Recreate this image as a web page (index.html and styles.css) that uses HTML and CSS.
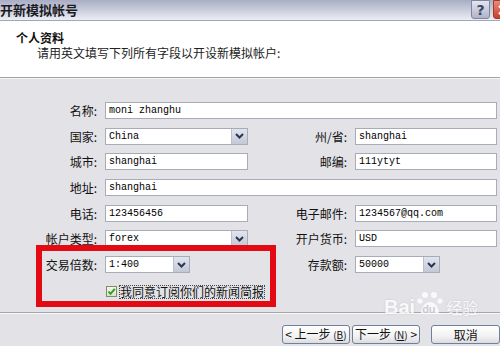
FILE: index.html
```html
<!DOCTYPE html>
<html>
<head>
<meta charset="utf-8">
<link rel="stylesheet" href="styles.css">
</head>
<body>
<div class="window">
  <div class="titlebar">
    <span class="title">开新模拟帐号</span>
    <div class="tb-buttons">
      <span class="tb-help">?</span>
      <span class="tb-close"><svg width="10" height="10" viewBox="0 0 10 10"><path d="M1 1 L9 9 M9 1 L1 9" stroke="#fff" stroke-width="2"/></svg></span>
    </div>
  </div>
  <div class="header">
    <div class="h-title">个人资料</div>
    <div class="h-sub">请用英文填写下列所有字段以开设新模拟帐户:</div>
  </div>
  <div class="body">
    <div class="grid">
      <label class="lbl">名称:</label>
      <div class="field span3">moni zhanghu</div>

      <label class="lbl">国家:</label>
      <div class="field select"><span class="val">China</span><span class="drop"><svg width="9" height="6" viewBox="0 0 9 6"><path d="M1 1 L4.5 4.5 L8 1" fill="none" stroke="#2b3550" stroke-width="2"/></svg></span></div>
      <label class="lbl">州/省:</label>
      <div class="field">shanghai</div>

      <label class="lbl">城市:</label>
      <div class="field">shanghai</div>
      <label class="lbl">邮编:</label>
      <div class="field">111ytyt</div>

      <label class="lbl">地址:</label>
      <div class="field span3">shanghai</div>

      <label class="lbl">电话:</label>
      <div class="field">123456456</div>
      <label class="lbl">电子邮件:</label>
      <div class="field">1234567@qq.com</div>

      <label class="lbl">帐户类型:</label>
      <div class="field select"><span class="val">forex</span><span class="drop"><svg width="9" height="6" viewBox="0 0 9 6"><path d="M1 1 L4.5 4.5 L8 1" fill="none" stroke="#2b3550" stroke-width="2"/></svg></span></div>
      <label class="lbl">开户货币:</label>
      <div class="field">USD</div>

      <label class="lbl">交易倍数:</label>
      <div class="field select short"><span class="val">1:400</span><span class="drop"><svg width="9" height="6" viewBox="0 0 9 6"><path d="M1 1 L4.5 4.5 L8 1" fill="none" stroke="#2b3550" stroke-width="2"/></svg></span></div>
      <label class="lbl">存款额:</label>
      <div class="field select short"><span class="val">50000</span><span class="drop"><svg width="9" height="6" viewBox="0 0 9 6"><path d="M1 1 L4.5 4.5 L8 1" fill="none" stroke="#2b3550" stroke-width="2"/></svg></span></div>
    </div>
    <div class="agree">
      <span class="check"><svg width="9" height="9" viewBox="0 0 9 9"><path d="M1.5 4.5 L3.5 6.8 L7.8 1.8" fill="none" stroke="#21a121" stroke-width="1.8"/></svg></span>
      <span class="agree-text">我同意订阅你们的新闻简报</span>
    </div>
  </div>
  <div class="footer">
    <button class="btn btn-back">&lt; 上一步 <small>(<u>B</u>)</small></button>
    <button class="btn btn-next">下一步 <small>(<u>N</u>)</small> &gt;</button>
    <button class="btn btn-cancel">取消</button>
  </div>
  <div class="redbox"></div>
  <div class="watermark">
    <span class="wm-bai">Bai</span>
    <span class="wm-paw">
      <svg width="28" height="28" viewBox="0 0 28 28">
        <circle cx="9" cy="5" r="3" fill="#fff"/>
        <circle cx="18" cy="5" r="3" fill="#fff"/>
        <circle cx="4" cy="11" r="2.6" fill="#fff"/>
        <circle cx="24" cy="11" r="2.6" fill="#fff"/>
        <path d="M5 24 C5 16 10 12 14 12 C18 12 23 16 23 24 Z" fill="#fff"/>
      </svg>
      <span class="wm-du">du</span>
    </span>
    <span class="wm-jy">经验</span>
  </div>
</div>
</body>
</html>
```
FILE: styles.css
```css
* { box-sizing: border-box; }
html, body {
  margin: 0;
  padding: 0;
}
body {
  width: 500px;
  height: 346px;
  overflow: hidden;
  font-family: "Noto Sans CJK SC", "DejaVu Sans", sans-serif;
  font-size: 12px;
  color: #111;
  background: #e3e3e7;
}
.window {
  position: relative;
  width: 500px;
  height: 346px;
  display: flex;
  flex-direction: column;
}
.titlebar {
  height: 21px;
  flex: none;
  display: flex;
  align-items: flex-start;
  justify-content: space-between;
  background: linear-gradient(#a9adc5, #cdd0de 55%, #eceef4);
  border-bottom: 1px solid #a3a6b8;
}
.title {
  font-weight: bold;
  font-size: 13px;
  line-height: 20px;
  color: #1a1a22;
}
.tb-buttons {
  display: flex;
  gap: 3px;
  margin-right: -13px;
}
.tb-help, .tb-close {
  width: 19px;
  height: 19px;
  border-radius: 0 0 3px 3px;
  display: flex;
  align-items: center;
  justify-content: center;
  font-family: "DejaVu Sans", sans-serif;
  font-weight: bold;
  font-size: 14px;
}
.tb-help {
  background: linear-gradient(#e4e6ee, #aeb3c7);
  border: 1px solid #7e849f;
  color: #3a4766;
}
.tb-close {
  width: 20px;
  background: linear-gradient(#e88a78, #c9402c);
  border: 1px solid #a03a2a;
}
.header {
  height: 57px;
  flex: none;
  background: #fff;
  border-bottom: 1px solid #a2a2a6;
  box-shadow: 0 1px 0 #f6f6f8;
  padding: 9px 0 0 16px;
}
.h-title {
  font-weight: bold;
  font-size: 12px;
  line-height: 16px;
  color: #111;
}
.h-sub {
  padding-left: 21px;
  font-size: 12px;
  line-height: 14px;
  color: #222;
}
.body {
  height: 234px;
  flex: none;
  padding-top: 24px;
}
.grid {
  display: grid;
  grid-template-columns: 105px 143px 107px 142px;
  grid-auto-rows: 17px;
  row-gap: 8.7px;
  align-items: center;
}
.lbl {
  text-align: right;
  padding-right: 8px;
  font-size: 12px;
  line-height: 17px;
  color: #111;
  white-space: nowrap;
}
.field {
  height: 17px;
  background: #fff;
  border: 1px solid #a7adb8;
  font-family: "Liberation Mono", "DejaVu Sans Mono", monospace;
  font-size: 10px;
  line-height: 15px;
  padding-left: 3px;
  color: #000;
  display: flex;
  align-items: center;
  white-space: nowrap;
  overflow: hidden;
}
.span3 { grid-column: 2 / 5; }
.select {
  justify-content: space-between;
  padding-right: 0;
}
.select.short { width: 85px; }
.drop {
  width: 16px;
  height: 15px;
  flex: none;
  display: flex;
  align-items: center;
  justify-content: center;
  background: linear-gradient(#e2e5ee, #c3c8d6);
  border-left: 1px solid #b9bfcd;
}
.agree {
  margin-top: 12px;
  padding-left: 106px;
  display: flex;
  align-items: center;
  gap: 3px;
  height: 13px;
}
.check {
  width: 11px;
  height: 11px;
  border: 1px solid #7f8c6a;
  background: linear-gradient(#f4f4e8, #e0e0cc);
  display: flex;
  align-items: center;
  justify-content: center;
}
.agree-text {
  font-size: 12px;
  line-height: 12px;
  outline: 1px dotted #444;
  color: #111;
}
.footer {
  flex: 1;
  border-top: 1px solid #a6a6aa;
  box-shadow: inset 0 1px 0 #f8f8fa;
  padding: 12px 0 0 282px;
  display: flex;
  align-items: flex-start;
}
.btn {
  height: 19px;
  padding: 0;
  margin: 0;
  border: 1px solid #6f7f9e;
  border-radius: 3px;
  background: linear-gradient(#ffffff, #f2f2f2 60%, #dcdce0);
  font-family: "Noto Sans CJK SC", sans-serif;
  font-size: 12px;
  line-height: 16px;
  color: #111;
}
.btn small { font-size: 10px; }
.btn-back { width: 69px; }
.btn-next { width: 70px; margin-left: 2px; }
.btn-cancel { width: 70px; margin-left: 11px; }
.redbox {
  position: absolute;
  left: 36px;
  top: 245px;
  width: 240px;
  height: 62px;
  border: 6px solid #e40a14;
  pointer-events: none;
}
.watermark {
  position: absolute;
  left: 384px;
  top: 290px;
  display: flex;
  align-items: flex-end;
  color: #fff;
  opacity: 0.8;
  text-shadow: 0 0 2px rgba(160,160,170,0.6);
}
.wm-bai {
  font-family: "Liberation Sans", sans-serif;
  font-weight: bold;
  font-size: 20px;
  line-height: 22px;
}
.wm-paw {
  position: relative;
  width: 28px;
  height: 28px;
  margin-left: 1px;
}
.wm-du {
  position: absolute;
  left: 6px;
  top: 13px;
  font-family: "Liberation Sans", sans-serif;
  font-weight: bold;
  font-size: 11px;
  color: #c8c8d0;
  text-shadow: none;
}
.wm-jy {
  font-size: 16px;
  line-height: 22px;
  margin-left: 2px;
}
```
